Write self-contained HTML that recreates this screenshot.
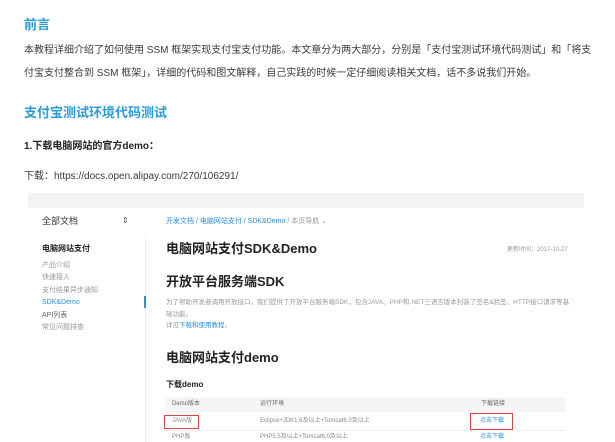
<!DOCTYPE html>
<html><head><meta charset="utf-8"><style>
*{margin:0;padding:0;box-sizing:border-box}
body{width:615px;height:442px;overflow:hidden;background:#fff;font-family:"Liberation Sans","Noto Sans CJK SC",sans-serif;color:#333;position:relative}
.a{position:absolute;white-space:nowrap;line-height:1.2}
.h{color:#2b9bd8;font-weight:bold;font-size:13px}
.p{font-size:10px;color:#3a3a3a}
.s{font-size:7px;color:#999}
</style></head><body>
<div class="a h" style="left:24px;top:17px">前言</div>
<div class="a p" style="left:24px;top:45px">本教程详细介绍了如何使用 SSM 框架实现支付宝支付功能。本文章分为两大部分，分别是「支付宝测试环境代码测试」和「将支</div>
<div class="a p" style="left:24px;top:68px">付宝支付整合到 SSM 框架」，详细的代码和图文解释，自己实践的时候一定仔细阅读相关文档，话不多说我们开始。</div>
<div class="a h" style="left:24px;top:105px">支付宝测试环境代码测试</div>
<div class="a p" style="left:24px;top:141px;font-weight:bold;color:#222">1.下载电脑网站的官方demo：</div>
<div class="a p" style="left:24px;top:171px">下载：https://docs.open.alipay.com/270/106291/</div>

<div class="a" style="left:28px;top:193px;width:556px;height:15px;background:#f3f3f3"></div>
<div class="a" style="left:42px;top:216px;font-size:9px;color:#333">全部文档</div>
<div class="a" style="left:122px;top:216px;font-size:8px;color:#555">⇕</div>
<div class="a" style="left:42px;top:244px;font-size:8px;font-weight:bold;color:#222">电脑网站支付</div>
<div class="a s" style="left:42px;top:262px">产品介绍</div>
<div class="a s" style="left:42px;top:274px">快速接入</div>
<div class="a s" style="left:42px;top:287px">支付结果异步通知</div>
<div class="a s" style="left:42px;top:299px;color:#2b8fd8">SDK&amp;Demo</div>
<div class="a s" style="left:42px;top:312px;color:#666">API列表</div>
<div class="a s" style="left:42px;top:324px">常见问题排查</div>
<div class="a" style="left:145px;top:235px;width:1px;height:207px;background:#eee"></div>
<div class="a" style="left:144px;top:296px;width:2px;height:12px;background:#2b8fd8"></div>
<div class="a s" style="left:166px;top:218px;color:#2b8fd8">开发文档 / 电脑网站支付 / SDK&amp;Demo <span style="color:#999">/ 本页导航 ⌄</span></div>
<div class="a" style="left:507px;top:247px;font-size:6px;color:#999">更新时间：2017-10-27</div>
<div class="a" style="left:166px;top:241px;font-size:13px;font-weight:bold;color:#222">电脑网站支付SDK&amp;Demo</div>
<div class="a" style="left:166px;top:274px;font-size:13px;font-weight:bold;color:#222">开放平台服务端SDK</div>
<div class="a s" style="left:166px;top:299px;font-size:6.5px">为了帮助开发者调用开放接口，我们提供了开放平台服务端SDK，包含JAVA、PHP和.NET三语言版本封装了签名&amp;验签、HTTP接口请求等基</div>
<div class="a s" style="left:166px;top:311px;font-size:6.5px">础功能。</div>
<div class="a s" style="left:166px;top:322px;font-size:6.5px">详见<span style="color:#2b8fd8">下载和使用教程</span>。</div>
<div class="a" style="left:166px;top:350px;font-size:13px;font-weight:bold;color:#222">电脑网站支付demo</div>
<div class="a" style="left:166px;top:380px;font-size:8px;font-weight:bold;color:#222">下载demo</div>
<div class="a" style="left:165px;top:397px;width:400px;height:15px;background:#f5f5f5"></div>
<div class="a" style="left:172px;top:401px;font-size:6px;color:#666">Demo版本</div>
<div class="a" style="left:260px;top:401px;font-size:6px;color:#666">运行环境</div>
<div class="a" style="left:481px;top:401px;font-size:6px;color:#666">下载链接</div>
<div class="a" style="left:165px;top:430px;width:400px;height:1px;background:#eee"></div>
<div class="a" style="left:164px;top:415px;width:35px;height:14px;border:1px solid #d44"></div>
<div class="a" style="left:172px;top:418px;font-size:6px;color:#888">JAVA版</div>
<div class="a" style="left:260px;top:418px;font-size:6px;color:#888">Eclipse+JDK1.6及以上+Tomcat6.0及以上</div>
<div class="a" style="left:470px;top:413px;width:43px;height:17px;border:1px solid #d44"></div>
<div class="a" style="left:480px;top:418px;font-size:6px;color:#2b8fd8">点击下载</div>
<div class="a" style="left:172px;top:434px;font-size:6px;color:#888">PHP版</div>
<div class="a" style="left:260px;top:434px;font-size:6px;color:#888">PHP5.5及以上+Tomcat6.0及以上</div>
<div class="a" style="left:480px;top:434px;font-size:6px;color:#2b8fd8">点击下载</div>
</body></html>
